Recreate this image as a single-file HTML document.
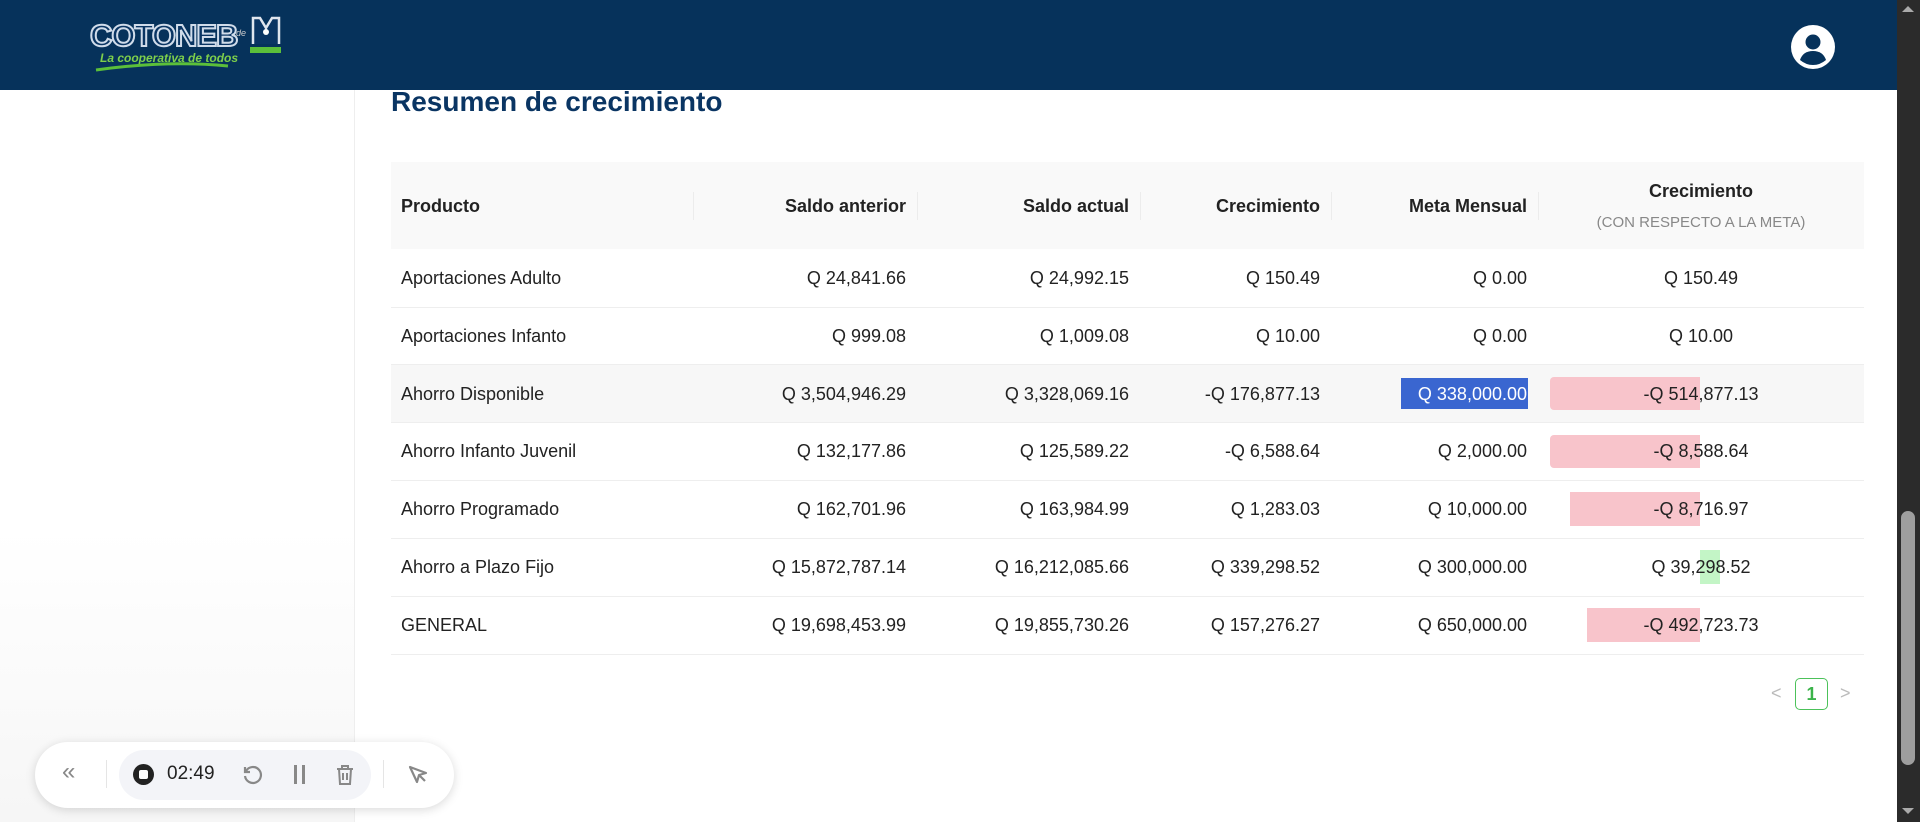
<!DOCTYPE html>
<html><head><meta charset="utf-8"><style>
*{margin:0;padding:0;box-sizing:border-box}
body{width:1920px;height:822px;overflow:hidden;background:#fff;font-family:"Liberation Sans",sans-serif;position:relative;color:#222}
.hdr{position:absolute;left:0;top:0;width:1897px;height:90px;background:#06325b}
.side{position:absolute;left:0;top:90px;width:355px;height:732px;background:linear-gradient(#fff 60%,#f6f6f6);border-right:1px solid #eee}
.sb{position:absolute;left:1897px;top:0;width:23px;height:822px;background:#2b2b2b}
.thumb{position:absolute;left:1901px;top:511px;width:14px;height:254px;background:#9e9e9e;border-radius:7px}
h1{position:absolute;left:391px;top:86px;font-size:28px;color:#0a3563;font-weight:bold}
.t{position:absolute;font-size:18px;white-space:nowrap}
.r{text-align:right}
.hd{position:absolute;left:391px;top:162px;width:1473px;height:87px;background:#f9f9f9}
.line{position:absolute;left:391px;width:1473px;height:1px;background:#eeeeee}
.div{position:absolute;top:192px;width:1px;height:28px;background:#ececec}
b{font-weight:bold}
</style></head><body>
<div class="hdr"></div>
<svg style="position:absolute;left:88px;top:14px" width="210" height="60">
<text x="2" y="32" font-family="Liberation Sans" font-weight="bold" font-size="31" fill="#0a3563" stroke="#d0dcea" stroke-width="2" letter-spacing="-1">COTONEB</text>
<text x="148" y="22" font-size="9" fill="#ccc" font-style="italic">de</text>
<path d="M165 30 V4 H172 L178 14 L184 4 H191 V30" fill="#0a3563" stroke="#e0e6ee" stroke-width="2.5"/>
<circle cx="178" cy="18" r="3" fill="#fff"/>
<rect x="162" y="33" width="31" height="6" fill="#5bbf3a"/>
<text x="12" y="48" font-size="12" font-style="italic" fill="#7ed04b" font-weight="bold">La cooperativa de todos</text>
<path d="M8 56 Q80 46 140 52" stroke="#5bbf3a" stroke-width="3" fill="none"/>
</svg>
<svg style="position:absolute;left:1791px;top:25px" width="44" height="44" viewBox="0 0 44 44"><circle cx="22" cy="22" r="22" fill="#fff"/><circle cx="22" cy="17" r="7.5" fill="#06325b"/><path d="M9 35 Q12 26 22 26 Q32 26 35 35 Q29 40 22 40 Q15 40 9 35Z" fill="#06325b"/></svg>
<div class="side"></div>
<h1>Resumen de crecimiento</h1>
<div class="hd"></div>
<div class="div" style="left:693px"></div><div class="div" style="left:917px"></div><div class="div" style="left:1140px"></div><div class="div" style="left:1331px"></div><div class="div" style="left:1538px"></div>
<div class="t" style="left:401px;top:196px"><b>Producto</b></div>
<div class="t r" style="left:700px;width:206px;top:196px"><b>Saldo anterior</b></div>
<div class="t r" style="left:920px;width:209px;top:196px"><b>Saldo actual</b></div>
<div class="t r" style="left:1140px;width:180px;top:196px"><b>Crecimiento</b></div>
<div class="t r" style="left:1330px;width:197px;top:196px"><b>Meta Mensual</b></div>
<div class="t" style="left:1538px;width:326px;text-align:center;top:181px"><b>Crecimiento</b></div>
<div class="t" style="left:1538px;width:326px;text-align:center;top:214px;font-size:15px;color:#888">(CON RESPECTO A LA META)</div>
<div style="position:absolute;left:391px;top:365px;width:1473px;height:58px;background:#f7f7f7"></div>
<div class="line" style="top:307px"></div><div class="line" style="top:364px"></div><div class="line" style="top:422px"></div><div class="line" style="top:480px"></div><div class="line" style="top:538px"></div><div class="line" style="top:596px"></div><div class="line" style="top:654px"></div>
<div style="position:absolute;left:1401px;top:378px;width:127px;height:31px;background:#3a66d0"></div>
<div style="position:absolute;left:1550px;top:377px;width:150px;height:33px;background:#f8c4cb;border-radius:4px 0 0 4px"></div>
<div style="position:absolute;left:1550px;top:435px;width:150px;height:33px;background:#f8c4cb;border-radius:4px 0 0 4px"></div>
<div style="position:absolute;left:1570px;top:492px;width:130px;height:34px;background:#f8c4cb"></div>
<div style="position:absolute;left:1700px;top:550px;width:20px;height:34px;background:#c3f5c6"></div>
<div style="position:absolute;left:1587px;top:608px;width:113px;height:34px;background:#f8c4cb"></div>
<div id="rows"></div>
<script>
var d=[["Aportaciones Adulto","Q 24,841.66","Q 24,992.15","Q 150.49","Q 0.00","Q 150.49"],
["Aportaciones Infanto","Q 999.08","Q 1,009.08","Q 10.00","Q 0.00","Q 10.00"],
["Ahorro Disponible","Q 3,504,946.29","Q 3,328,069.16","-Q 176,877.13","Q 338,000.00","-Q 514,877.13"],
["Ahorro Infanto Juvenil","Q 132,177.86","Q 125,589.22","-Q 6,588.64","Q 2,000.00","-Q 8,588.64"],
["Ahorro Programado","Q 162,701.96","Q 163,984.99","Q 1,283.03","Q 10,000.00","-Q 8,716.97"],
["Ahorro a Plazo Fijo","Q 15,872,787.14","Q 16,212,085.66","Q 339,298.52","Q 300,000.00","Q 39,298.52"],
["GENERAL","Q 19,698,453.99","Q 19,855,730.26","Q 157,276.27","Q 650,000.00","-Q 492,723.73"]];
var h="";d.forEach(function(r,i){var y=268+i*57.8;
h+='<div class="t" style="left:401px;top:'+y+'px">'+r[0]+'</div>';
h+='<div class="t r" style="left:700px;width:206px;top:'+y+'px">'+r[1]+'</div>';
h+='<div class="t r" style="left:920px;width:209px;top:'+y+'px">'+r[2]+'</div>';
h+='<div class="t r" style="left:1140px;width:180px;top:'+y+'px">'+r[3]+'</div>';
h+='<div class="t r" style="left:1330px;width:197px;top:'+y+'px;'+(i==2?'color:#fff':'')+'">'+r[4]+'</div>';
h+='<div class="t" style="left:1538px;width:326px;text-align:center;top:'+y+'px">'+r[5]+'</div>';});
document.getElementById("rows").innerHTML=h;
</script>
<div class="t" style="left:1771px;top:683px;color:#bbb">&lt;</div>
<div style="position:absolute;left:1795px;top:678px;width:33px;height:32px;border:1px solid #4cc25a;border-radius:5px;color:#3bb34a;font-weight:bold;font-size:18px;text-align:center;line-height:30px">1</div>
<div class="t" style="left:1840px;top:683px;color:#bbb">&gt;</div>
<div class="sb"></div><div class="thumb"></div>
<div style="position:absolute;left:1902px;top:6px;width:0;height:0;border-left:6px solid transparent;border-right:6px solid transparent;border-bottom:6px solid #aaa"></div>
<div style="position:absolute;left:1902px;top:808px;width:0;height:0;border-left:6px solid transparent;border-right:6px solid transparent;border-top:6px solid #aaa"></div>
<div style="position:absolute;left:35px;top:742px;width:419px;height:66px;background:#fff;border-radius:33px;box-shadow:0 2px 10px rgba(0,0,0,.15)"></div>
<div style="position:absolute;left:119px;top:750px;width:252px;height:50px;background:#f3f4f8;border-radius:25px"></div>
<div class="t" style="left:62px;top:758px;color:#888;font-size:24px">«</div>
<div style="position:absolute;left:106px;top:760px;width:1px;height:28px;background:#e5e5e5"></div>
<div style="position:absolute;left:133px;top:764px;width:21px;height:21px;border-radius:50%;background:#222"></div>
<div style="position:absolute;left:139px;top:770px;width:9px;height:9px;border-radius:2px;background:#fff"></div>
<div class="t" style="left:167px;top:763px;font-size:19px;color:#222">02:49</div>
<svg style="position:absolute;left:242px;top:764px" width="22" height="22" viewBox="0 0 22 22" fill="none" stroke="#888" stroke-width="2.2"><path d="M4 7 A8 8 0 1 1 3 12"/><path d="M3 3 V8 H8"/></svg>
<div style="position:absolute;left:294px;top:765px;width:3px;height:19px;background:#888"></div>
<div style="position:absolute;left:302px;top:765px;width:3px;height:19px;background:#888"></div>
<svg style="position:absolute;left:335px;top:764px" width="20" height="22" viewBox="0 0 20 22" fill="none" stroke="#888" stroke-width="2"><path d="M2 5 H18 M7 5 V2 H13 V5 M4 5 L5 20 H15 L16 5 M8 9 V16 M12 9 V16"/></svg>
<div style="position:absolute;left:383px;top:760px;width:1px;height:28px;background:#e5e5e5"></div>
<svg style="position:absolute;left:407px;top:764px" width="22" height="22" viewBox="0 0 22 22" fill="none" stroke="#888" stroke-width="2.2" stroke-linejoin="round"><path d="M3 3 L19 9 L12 11 L10 18 Z M12 11 L18 17"/></svg>
</body></html>
